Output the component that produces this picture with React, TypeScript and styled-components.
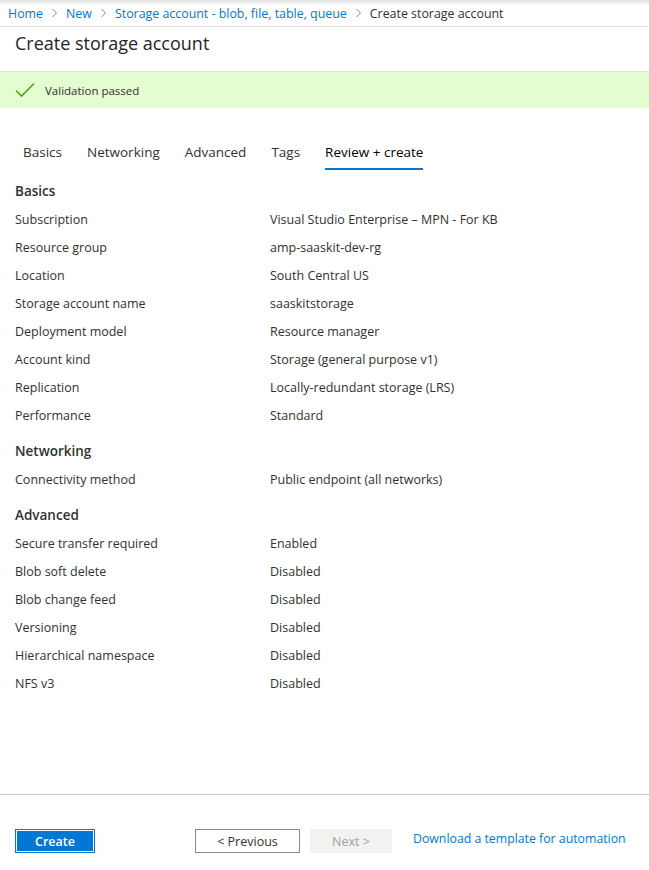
import React from "react";
import styled, { createGlobalStyle } from "styled-components";

const Global = createGlobalStyle`
  html, body { margin: 0; padding: 0; background: #fff; }
  body { font-family: "Open Sans", "Noto Sans", sans-serif; color: #323130; }
  * { box-sizing: border-box; }
`;

const Page = styled.div`
  display: flex;
  flex-direction: column;
  min-height: 870px;
  width: 649px;
`;

const Breadcrumb = styled.nav`
  height: 27px;
  display: flex;
  align-items: center;
  gap: 7px;
  padding: 0 8px;
  font-size: 12.4px;
  border-bottom: 1px solid #e1dfdd;
  background: linear-gradient(#e3e3e3 0px, #ffffff 6px);
`;

const Crumb = styled.span<{ $current?: boolean }>`
  color: ${(p) => (p.$current ? "#323130" : "#0078d4")};
  white-space: nowrap;
`;

const Chevron = styled.svg`
  width: 9px;
  height: 10px;
  flex: none;
`;

const TitleBar = styled.header`
  height: 45px;
  padding: 4px 15px 0;
  border-bottom: 1px solid #e1dfdd;
`;

const Title = styled.h1`
  margin: 0;
  font-size: 18px;
  font-weight: 400;
  line-height: 24px;
  color: #252423;
`;

const Banner = styled.div`
  height: 36px;
  background: #e3fcd0;
  display: flex;
  align-items: center;
  gap: 10px;
  padding-left: 15px;
  font-size: 11.5px;
  color: #323130;
`;

const Content = styled.main`
  flex: 1;
  padding: 28px 15px 0;
`;

const Tabs = styled.div`
  display: flex;
  gap: 25px;
  padding-left: 8px;
  height: 34px;
  margin-bottom: 7px;
`;

const Tab = styled.div<{ $active?: boolean }>`
  font-size: 13.5px;
  color: ${(p) => (p.$active ? "#000" : "#323130")};
  font-weight: ${(p) => (p.$active ? 500 : 400)};
  border-bottom: 2px solid ${(p) => (p.$active ? "#0078d4" : "transparent")};
  height: 34px;
  line-height: 32px;
  white-space: nowrap;
`;

const Section = styled.section`
  & + & { margin-top: 8px; }
`;

const SectionTitle = styled.h2`
  margin: 0;
  height: 28px;
  line-height: 28px;
  font-size: 13.5px;
  font-weight: 600;
  color: #323130;
`;

const Row = styled.div`
  display: grid;
  grid-template-columns: 255px 1fr;
  height: 28px;
  align-items: center;
  font-size: 12.5px;
  color: #323130;
  white-space: nowrap;
`;

const Footer = styled.footer`
  height: 76px;
  border-top: 1px solid #c8c6c4;
  display: flex;
  align-items: flex-start;
  padding: 34px 15px 0;
`;

const PrimaryButton = styled.button`
  width: 80px;
  height: 24px;
  background: #0078d4;
  border: 1px solid #0078d4;
  outline: 1px solid #fff;
  outline-offset: -2px;
  color: #fff;
  font-family: inherit;
  font-size: 12.5px;
  font-weight: 600;
  padding: 0;
  margin-right: 100px;
`;

const SecondaryButton = styled.button<{ $disabled?: boolean }>`
  width: ${(p) => (p.$disabled ? "82px" : "105px")};
  height: 24px;
  background: ${(p) => (p.$disabled ? "#f3f2f1" : "#fff")};
  border: 1px solid ${(p) => (p.$disabled ? "#f3f2f1" : "#8a8886")};
  color: ${(p) => (p.$disabled ? "#a19f9d" : "#323130")};
  font-family: inherit;
  font-size: 12.5px;
  padding: 0;
  margin-right: ${(p) => (p.$disabled ? "21px" : "10px")};
`;

const Link = styled.a`
  color: #0078d4;
  font-size: 12.3px;
  line-height: 20px;
  text-decoration: none;
  white-space: nowrap;
`;

const ChevronIcon = () => (
  <Chevron viewBox="0 0 9 10">
    <path d="M2.5 1 L6.5 5 L2.5 9" fill="none" stroke="#8a8886" strokeWidth="1" />
  </Chevron>
);

const sections: { title: string; rows: [string, string][] }[] = [
  {
    title: "Basics",
    rows: [
      ["Subscription", "Visual Studio Enterprise – MPN - For KB"],
      ["Resource group", "amp-saaskit-dev-rg"],
      ["Location", "South Central US"],
      ["Storage account name", "saaskitstorage"],
      ["Deployment model", "Resource manager"],
      ["Account kind", "Storage (general purpose v1)"],
      ["Replication", "Locally-redundant storage (LRS)"],
      ["Performance", "Standard"],
    ],
  },
  {
    title: "Networking",
    rows: [["Connectivity method", "Public endpoint (all networks)"]],
  },
  {
    title: "Advanced",
    rows: [
      ["Secure transfer required", "Enabled"],
      ["Blob soft delete", "Disabled"],
      ["Blob change feed", "Disabled"],
      ["Versioning", "Disabled"],
      ["Hierarchical namespace", "Disabled"],
      ["NFS v3", "Disabled"],
    ],
  },
];

export default function App() {
  return (
    <Page>
      <Global />
      <Breadcrumb>
        <Crumb>Home</Crumb>
        <ChevronIcon />
        <Crumb>New</Crumb>
        <ChevronIcon />
        <Crumb>Storage account - blob, file, table, queue</Crumb>
        <ChevronIcon />
        <Crumb $current>Create storage account</Crumb>
      </Breadcrumb>
      <TitleBar>
        <Title>Create storage account</Title>
      </TitleBar>
      <Banner>
        <svg width="20" height="16" viewBox="0 0 20 16">
          <path d="M1 8.5 L6.5 14 L19 1.5" fill="none" stroke="#57a300" strokeWidth="1.6" />
        </svg>
        <span>Validation passed</span>
      </Banner>
      <Content>
        <Tabs>
          <Tab>Basics</Tab>
          <Tab>Networking</Tab>
          <Tab>Advanced</Tab>
          <Tab>Tags</Tab>
          <Tab $active>Review + create</Tab>
        </Tabs>
        {sections.map((s) => (
          <Section key={s.title}>
            <SectionTitle>{s.title}</SectionTitle>
            {s.rows.map(([k, v]) => (
              <Row key={k}>
                <span>{k}</span>
                <span>{v}</span>
              </Row>
            ))}
          </Section>
        ))}
      </Content>
      <Footer>
        <PrimaryButton>Create</PrimaryButton>
        <SecondaryButton>&lt; Previous</SecondaryButton>
        <SecondaryButton $disabled>Next &gt;</SecondaryButton>
        <Link href="#">Download a template for automation</Link>
      </Footer>
    </Page>
  );
}
